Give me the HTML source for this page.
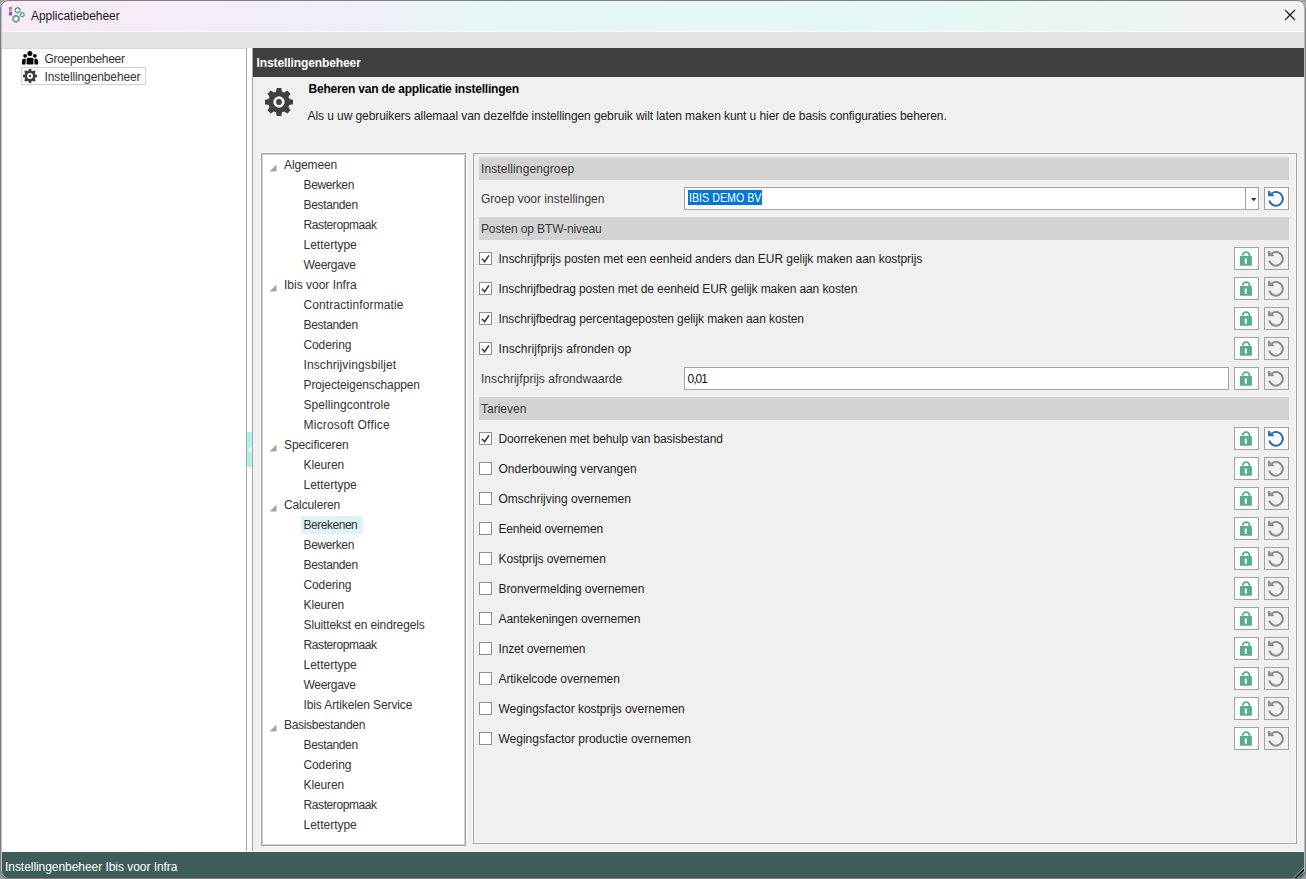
<!DOCTYPE html>
<html><head><meta charset="utf-8"><title>Applicatiebeheer</title>
<style>
*{box-sizing:border-box}
html,body{margin:0;padding:0}
body{width:1306px;height:879px;overflow:hidden;background:#9c9c9c;position:relative;font-family:"Liberation Sans",sans-serif;font-size:12px}
.win{position:absolute;left:0;top:0;width:1306px;height:879px;border-radius:8px;overflow:hidden;background:#f0f0f0}
.frame{position:absolute;left:0;top:0;width:1306px;height:879px;border:1px solid #7f7f7f;border-radius:8px;pointer-events:none;box-shadow:inset 1px 0 0 #c0c0c0,inset -1px 0 0 #b8b8b8}
.a{position:absolute}
.t{position:absolute;white-space:nowrap;line-height:14px;font-size:12px;color:#333}
.title{left:0;top:0;width:1306px;height:31px;background:linear-gradient(90deg,#f7ebf6 0%,#f3edf7 22%,#e6f5f6 36%,#e3f7f6 70%,#e9f4f4 84%,#f0f2f2 94%,#f2f2f2 100%)}
.tr{letter-spacing:-0.12px}
.hl{position:absolute;left:301px;width:62px;height:18px;background:#dcf4f4}
.tri{position:absolute}
.band{position:absolute;left:479px;width:810px;height:23px;background:#d3d3d3}
.btn{position:absolute;width:25px;height:23px;border:1px solid #a3a3a3;background:#fff}
.ic{position:absolute;left:-1px;top:-1px}
.btn.dis{background:#f0f0f0}
.cb{position:absolute;left:479px;width:13px;height:13px;border:1px solid #8f8f8f;background:#fff;display:flex;align-items:center;justify-content:center}
.cbl{color:#222;letter-spacing:-0.07px}
.lab{color:#383838}
.combo{position:absolute;left:684px;width:575px;height:23px;border:1px solid #a3a3a3;background:#fff}
.sel{position:absolute;left:3px;top:2px;width:74px;height:15px;background:#0078d7;color:#fff;line-height:16px;font-size:12.5px;padding-left:1px;white-space:nowrap;overflow:hidden}
.csep{position:absolute;left:560px;top:0;width:1px;height:21px;background:#a3a3a3}
.carr{position:absolute;left:566px;top:10px}
.field{position:absolute;left:684px;width:545px;height:23px;border:1px solid #a3a3a3;background:#fff}
.val{color:#111}
</style></head><body>
<div class="win">
 <div class="a title"></div>
 <div class="a" style="left:6px;top:6px"><svg width="20" height="20" viewBox="0 0 20 20">
<rect x="3" y="1" width="3" height="2.8" fill="#f06a5a"/><rect x="3" y="3.8" width="3" height="2.4" fill="#6fd0c8"/><rect x="3" y="6.2" width="3" height="3.2" fill="#e020e0"/>
<g fill="#fff" stroke="#4f9793" stroke-linejoin="round">
<polygon points="11.60,6.80 9.35,5.50 9.35,2.90 11.60,1.60 13.85,2.90 13.85,5.50" stroke-width="1.3"/>
<polygon points="16.20,10.80 14.38,9.75 14.38,7.65 16.20,6.60 18.02,7.65 18.02,9.75" stroke-width="1.2"/>
<polygon points="10.00,16.10 7.14,14.45 7.14,11.15 10.00,9.50 12.86,11.15 12.86,14.45" stroke-width="1.5"/>
</g></svg></div>
 <div class="t" style="left:31px;top:9px;color:#1a1a1a;letter-spacing:-0.05px">Applicatiebeheer</div>
 <svg class="a" style="left:1284px;top:9px" width="12" height="12"><path d="M1 1 L11 11 M11 1 L1 11" stroke="#111" stroke-width="1.1"/></svg>
 <div class="a" style="left:0;top:31px;width:1306px;height:1px;background:#fbfbfb"></div>
 <div class="a" style="left:0;top:32px;width:1306px;height:16px;background:#e3e3e3"></div>
 <!-- left panel -->
 <div class="a" style="left:0;top:48px;width:246px;height:803px;background:#fff"></div>
 <div class="a" style="left:0;top:48px;width:246px;height:1px;background:#dadada"></div>
 <div class="a" style="left:246px;top:48px;width:1px;height:803px;background:#a8a8a8"></div>
 <div class="a" style="left:247px;top:48px;width:5px;height:803px;background:#fff"></div>
 <div class="a" style="left:247px;top:432px;width:5px;height:35px;background:#b0f0ea"></div>
 <svg class="a" style="left:248px;top:446px" width="4" height="7"><path d="M3.5 0 V6.5 L0 3.25 Z" fill="#fff"/></svg>
 <div class="a" style="left:252px;top:48px;width:1px;height:803px;background:#a8a8a8"></div>
 <div class="a" style="left:21px;top:51px"><svg width="18" height="16" viewBox="0 0 18 16"><g fill="#000">
<circle cx="8.9" cy="2.6" r="2.5"/><circle cx="4.1" cy="4.8" r="1.9"/><circle cx="13.9" cy="4.8" r="1.9"/>
<rect x="5.6" y="6.8" width="6.8" height="6.8" rx="1.4"/>
<path d="M1 13.6 V10 A2.2 2.2 0 0 1 3.5 7.8 H4.6 V13.6 Z"/><path d="M17 13.6 V10 A2.2 2.2 0 0 0 14.5 7.8 H13.4 V13.6 Z"/>
</g></svg></div>
 <div class="t" style="left:44.5px;top:52px;letter-spacing:-0.3px">Groepenbeheer</div>
 <div class="a" style="left:21px;top:67px;width:125px;height:18px;border:1px solid #d2d2d2"></div>
 <div class="a" style="left:22px;top:68px"><svg width="16" height="16" viewBox="-8 -8 16 16"><path d="M-1.51 -5.19 L-1.17 -7.00 L1.17 -7.00 L1.51 -5.19 L1.88 -5.06 L2.25 -4.91 L2.60 -4.73 L4.13 -5.78 L5.78 -4.13 L4.73 -2.60 L4.91 -2.25 L5.06 -1.88 L5.19 -1.51 L7.00 -1.17 L7.00 1.17 L5.19 1.51 L5.06 1.88 L4.91 2.25 L4.73 2.60 L5.78 4.13 L4.13 5.78 L2.60 4.73 L2.25 4.91 L1.88 5.06 L1.51 5.19 L1.17 7.00 L-1.17 7.00 L-1.51 5.19 L-1.88 5.06 L-2.25 4.91 L-2.60 4.73 L-4.13 5.78 L-5.78 4.13 L-4.73 2.60 L-4.91 2.25 L-5.06 1.88 L-5.19 1.51 L-7.00 1.17 L-7.00 -1.17 L-5.19 -1.51 L-5.06 -1.88 L-4.91 -2.25 L-4.73 -2.60 L-5.78 -4.13 L-4.13 -5.78 L-2.60 -4.73 L-2.25 -4.91 L-1.88 -5.06 Z" fill="#3c3c3c"/><circle r="2.95" fill="#fff"/><circle r="1.2" fill="#3c3c3c"/></svg></div>
 <div class="t" style="left:44.5px;top:70px;letter-spacing:-0.12px">Instellingenbeheer</div>
 <!-- right header -->
 <div class="a" style="left:253px;top:48px;width:1053px;height:29px;background:#404040"></div>
 <div class="t" style="left:256.5px;top:56px;color:#fff;font-weight:bold;letter-spacing:-0.1px">Instellingenbeheer</div>
 <div class="a" style="left:263px;top:86px"><svg width="32" height="32" viewBox="-16 -16 32 32"><path d="M-3.01 -10.37 L-2.33 -14.01 L2.33 -14.01 L3.01 -10.37 L3.76 -10.12 L4.50 -9.82 L5.20 -9.46 L8.26 -11.55 L11.55 -8.26 L9.46 -5.20 L9.82 -4.50 L10.12 -3.76 L10.37 -3.01 L14.01 -2.33 L14.01 2.33 L10.37 3.01 L10.12 3.76 L9.82 4.50 L9.46 5.20 L11.55 8.26 L8.26 11.55 L5.20 9.46 L4.50 9.82 L3.76 10.12 L3.01 10.37 L2.33 14.01 L-2.33 14.01 L-3.01 10.37 L-3.76 10.12 L-4.50 9.82 L-5.20 9.46 L-8.26 11.55 L-11.55 8.26 L-9.46 5.20 L-9.82 4.50 L-10.12 3.76 L-10.37 3.01 L-14.01 2.33 L-14.01 -2.33 L-10.37 -3.01 L-10.12 -3.76 L-9.82 -4.50 L-9.46 -5.20 L-11.55 -8.26 L-8.26 -11.55 L-5.20 -9.46 L-4.50 -9.82 L-3.76 -10.12 Z" fill="#404040"/><circle r="5.7" fill="#f0f0f0"/><circle r="2.9" fill="#404040"/></svg></div>
 <div class="t" style="left:308.5px;top:82px;color:#000;font-weight:bold;letter-spacing:-0.2px">Beheren van de applicatie instellingen</div>
 <div class="t" style="left:307.5px;top:108.5px;color:#222;letter-spacing:-0.08px">Als u uw gebruikers allemaal van dezelfde instellingen gebruik wilt laten maken kunt u hier de basis configuraties beheren.</div>
 <!-- tree box -->
 <div class="a" style="left:261px;top:153px;width:205px;height:693px;border:1px solid #a4a4a4;background:#fff;box-shadow:inset 1px 1px 0 #d0d0d0,inset -1px -1px 0 #d0d0d0,0 0 0 1px #f6f6f6"></div>
 <svg class="tri" style="left:269px;top:164px" width="8" height="8"><path d="M7.5 0.5 L7.5 7.5 L0.5 7.5 Z" fill="#a6a6a6"/></svg>
<div class="t tr" style="left:284px;top:158px;letter-spacing:-0.120px">Algemeen</div>
<div class="t tr" style="left:303.5px;top:178px;letter-spacing:-0.363px">Bewerken</div>
<div class="t tr" style="left:303.5px;top:198px;letter-spacing:-0.345px">Bestanden</div>
<div class="t tr" style="left:303.5px;top:218px;letter-spacing:-0.402px">Rasteropmaak</div>
<div class="t tr" style="left:303.5px;top:238px;letter-spacing:-0.009px">Lettertype</div>
<div class="t tr" style="left:303.5px;top:258px;letter-spacing:-0.291px">Weergave</div>
<svg class="tri" style="left:269px;top:284px" width="8" height="8"><path d="M7.5 0.5 L7.5 7.5 L0.5 7.5 Z" fill="#a6a6a6"/></svg>
<div class="t tr" style="left:284px;top:278px;letter-spacing:-0.006px">Ibis voor Infra</div>
<div class="t tr" style="left:303.5px;top:298px;letter-spacing:0.115px">Contractinformatie</div>
<div class="t tr" style="left:303.5px;top:318px;letter-spacing:-0.345px">Bestanden</div>
<div class="t tr" style="left:303.5px;top:338px;letter-spacing:-0.120px">Codering</div>
<div class="t tr" style="left:303.5px;top:358px;letter-spacing:0.108px">Inschrijvingsbiljet</div>
<div class="t tr" style="left:303.5px;top:378px;letter-spacing:-0.120px">Projecteigenschappen</div>
<div class="t tr" style="left:303.5px;top:398px;letter-spacing:0.073px">Spellingcontrole</div>
<div class="t tr" style="left:303.5px;top:418px;letter-spacing:0.207px">Microsoft Office</div>
<svg class="tri" style="left:269px;top:444px" width="8" height="8"><path d="M7.5 0.5 L7.5 7.5 L0.5 7.5 Z" fill="#a6a6a6"/></svg>
<div class="t tr" style="left:284px;top:438px;letter-spacing:-0.120px">Specificeren</div>
<div class="t tr" style="left:303.5px;top:458px;letter-spacing:-0.120px">Kleuren</div>
<div class="t tr" style="left:303.5px;top:478px;letter-spacing:-0.009px">Lettertype</div>
<svg class="tri" style="left:269px;top:504px" width="8" height="8"><path d="M7.5 0.5 L7.5 7.5 L0.5 7.5 Z" fill="#a6a6a6"/></svg>
<div class="t tr" style="left:284px;top:498px;letter-spacing:-0.120px">Calculeren</div>
<div class="hl" style="top:516px"></div>
<div class="t tr" style="left:303.5px;top:518px;letter-spacing:-0.470px">Berekenen</div>
<div class="t tr" style="left:303.5px;top:538px;letter-spacing:-0.363px">Bewerken</div>
<div class="t tr" style="left:303.5px;top:558px;letter-spacing:-0.345px">Bestanden</div>
<div class="t tr" style="left:303.5px;top:578px;letter-spacing:-0.120px">Codering</div>
<div class="t tr" style="left:303.5px;top:598px;letter-spacing:-0.120px">Kleuren</div>
<div class="t tr" style="left:303.5px;top:618px;letter-spacing:-0.120px">Sluittekst en eindregels</div>
<div class="t tr" style="left:303.5px;top:638px;letter-spacing:-0.402px">Rasteropmaak</div>
<div class="t tr" style="left:303.5px;top:658px;letter-spacing:-0.009px">Lettertype</div>
<div class="t tr" style="left:303.5px;top:678px;letter-spacing:-0.291px">Weergave</div>
<div class="t tr" style="left:303.5px;top:698px;letter-spacing:-0.120px">Ibis Artikelen Service</div>
<svg class="tri" style="left:269px;top:724px" width="8" height="8"><path d="M7.5 0.5 L7.5 7.5 L0.5 7.5 Z" fill="#a6a6a6"/></svg>
<div class="t tr" style="left:284px;top:718px;letter-spacing:-0.312px">Basisbestanden</div>
<div class="t tr" style="left:303.5px;top:738px;letter-spacing:-0.345px">Bestanden</div>
<div class="t tr" style="left:303.5px;top:758px;letter-spacing:-0.120px">Codering</div>
<div class="t tr" style="left:303.5px;top:778px;letter-spacing:-0.120px">Kleuren</div>
<div class="t tr" style="left:303.5px;top:798px;letter-spacing:-0.402px">Rasteropmaak</div>
<div class="t tr" style="left:303.5px;top:818px;letter-spacing:-0.009px">Lettertype</div>

 <!-- settings box -->
 <div class="a" style="left:473px;top:153px;width:824px;height:691px;border:1px solid #a4a4a4;background:#f0f0f0;box-shadow:inset 1px 1px 0 #f8f8f8,inset -1px -1px 0 #f8f8f8,0 0 0 1px #f6f6f6"></div>
 <div class="band" style="top:157px"></div>
<div class="t lab" style="left:481px;top:162px;letter-spacing:0.106px">Instellingengroep</div>
<div class="t lab" style="left:481px;top:192px;">Groep voor instellingen</div>
<div class="combo" style="top:187px"><div class="sel"><span style="display:inline-block;transform:scaleX(0.855);transform-origin:0 0">IBIS DEMO BV</span></div><div class="csep"></div><svg class="carr" width="6" height="4"><path d="M0 0 H5.5 L2.75 3.2 Z" fill="#333"/></svg></div>
<div class="btn" style="left:1264px;top:187px"><svg class="ic" width="25" height="23" viewBox="0 0 25 23"><path d="M5.3 13.6 A6.85 6.85 0 1 0 7.6 6.5" fill="none" stroke="#2f6fb8" stroke-width="2.1"/><path d="M4.05 3.9 L6.1 3.9 L6.5 5.7 L9.9 7.9 L9.9 9.3 L4.05 9.3 Z" fill="#2f6fb8"/></svg></div>
<div class="band" style="top:217px"></div>
<div class="t lab" style="left:481px;top:222px;letter-spacing:-0.132px">Posten op BTW-niveau</div>
<div class="cb" style="top:252px"><svg width="11" height="11" viewBox="0 0 11 11"><path d="M2 5.8 L4.6 8.7 L8.9 2.4" fill="none" stroke="#3a3a3a" stroke-width="1.6"/></svg></div>
<div class="t cbl" style="left:498.5px;top:252px;letter-spacing:-0.057px">Inschrijfprijs posten met een eenheid anders dan EUR gelijk maken aan kostprijs</div>
<div class="btn" style="left:1234px;top:247px"><svg class="ic" width="25" height="23" viewBox="0 0 25 23"><path d="M8.7 8.5 A3.4 3.4 0 0 1 15.5 8.5 V9.6" fill="none" stroke="#57ae88" stroke-width="1.9"/><rect x="5.9" y="9" width="12" height="9.7" rx="0.4" fill="#57ae88"/><rect x="10.8" y="11.5" width="2" height="5.2" fill="#fff"/></svg></div>
<div class="btn dis" style="left:1264px;top:247px"><svg class="ic" width="25" height="23" viewBox="0 0 25 23"><path d="M5.3 13.6 A6.85 6.85 0 1 0 7.6 6.5" fill="none" stroke="#8c8c8c" stroke-width="2.1"/><path d="M4.05 3.9 L6.1 3.9 L6.5 5.7 L9.9 7.9 L9.9 9.3 L4.05 9.3 Z" fill="#8c8c8c"/></svg></div>
<div class="cb" style="top:282px"><svg width="11" height="11" viewBox="0 0 11 11"><path d="M2 5.8 L4.6 8.7 L8.9 2.4" fill="none" stroke="#3a3a3a" stroke-width="1.6"/></svg></div>
<div class="t cbl" style="left:498.5px;top:282px;letter-spacing:-0.095px">Inschrijfbedrag posten met de eenheid EUR gelijk maken aan kosten</div>
<div class="btn" style="left:1234px;top:277px"><svg class="ic" width="25" height="23" viewBox="0 0 25 23"><path d="M8.7 8.5 A3.4 3.4 0 0 1 15.5 8.5 V9.6" fill="none" stroke="#57ae88" stroke-width="1.9"/><rect x="5.9" y="9" width="12" height="9.7" rx="0.4" fill="#57ae88"/><rect x="10.8" y="11.5" width="2" height="5.2" fill="#fff"/></svg></div>
<div class="btn dis" style="left:1264px;top:277px"><svg class="ic" width="25" height="23" viewBox="0 0 25 23"><path d="M5.3 13.6 A6.85 6.85 0 1 0 7.6 6.5" fill="none" stroke="#8c8c8c" stroke-width="2.1"/><path d="M4.05 3.9 L6.1 3.9 L6.5 5.7 L9.9 7.9 L9.9 9.3 L4.05 9.3 Z" fill="#8c8c8c"/></svg></div>
<div class="cb" style="top:312px"><svg width="11" height="11" viewBox="0 0 11 11"><path d="M2 5.8 L4.6 8.7 L8.9 2.4" fill="none" stroke="#3a3a3a" stroke-width="1.6"/></svg></div>
<div class="t cbl" style="left:498.5px;top:312px;letter-spacing:-0.086px">Inschrijfbedrag percentageposten gelijk maken aan kosten</div>
<div class="btn" style="left:1234px;top:307px"><svg class="ic" width="25" height="23" viewBox="0 0 25 23"><path d="M8.7 8.5 A3.4 3.4 0 0 1 15.5 8.5 V9.6" fill="none" stroke="#57ae88" stroke-width="1.9"/><rect x="5.9" y="9" width="12" height="9.7" rx="0.4" fill="#57ae88"/><rect x="10.8" y="11.5" width="2" height="5.2" fill="#fff"/></svg></div>
<div class="btn dis" style="left:1264px;top:307px"><svg class="ic" width="25" height="23" viewBox="0 0 25 23"><path d="M5.3 13.6 A6.85 6.85 0 1 0 7.6 6.5" fill="none" stroke="#8c8c8c" stroke-width="2.1"/><path d="M4.05 3.9 L6.1 3.9 L6.5 5.7 L9.9 7.9 L9.9 9.3 L4.05 9.3 Z" fill="#8c8c8c"/></svg></div>
<div class="cb" style="top:342px"><svg width="11" height="11" viewBox="0 0 11 11"><path d="M2 5.8 L4.6 8.7 L8.9 2.4" fill="none" stroke="#3a3a3a" stroke-width="1.6"/></svg></div>
<div class="t cbl" style="left:498.5px;top:342px;letter-spacing:0.074px">Inschrijfprijs afronden op</div>
<div class="btn" style="left:1234px;top:337px"><svg class="ic" width="25" height="23" viewBox="0 0 25 23"><path d="M8.7 8.5 A3.4 3.4 0 0 1 15.5 8.5 V9.6" fill="none" stroke="#57ae88" stroke-width="1.9"/><rect x="5.9" y="9" width="12" height="9.7" rx="0.4" fill="#57ae88"/><rect x="10.8" y="11.5" width="2" height="5.2" fill="#fff"/></svg></div>
<div class="btn dis" style="left:1264px;top:337px"><svg class="ic" width="25" height="23" viewBox="0 0 25 23"><path d="M5.3 13.6 A6.85 6.85 0 1 0 7.6 6.5" fill="none" stroke="#8c8c8c" stroke-width="2.1"/><path d="M4.05 3.9 L6.1 3.9 L6.5 5.7 L9.9 7.9 L9.9 9.3 L4.05 9.3 Z" fill="#8c8c8c"/></svg></div>
<div class="t lab" style="left:481px;top:372px;letter-spacing:0.04px">Inschrijfprijs afrondwaarde</div>
<div class="field" style="top:367px"><div class="t val" style="left:2.5px;top:4px;letter-spacing:-1px">0,01</div></div>
<div class="btn" style="left:1234px;top:367px"><svg class="ic" width="25" height="23" viewBox="0 0 25 23"><path d="M8.7 8.5 A3.4 3.4 0 0 1 15.5 8.5 V9.6" fill="none" stroke="#57ae88" stroke-width="1.9"/><rect x="5.9" y="9" width="12" height="9.7" rx="0.4" fill="#57ae88"/><rect x="10.8" y="11.5" width="2" height="5.2" fill="#fff"/></svg></div>
<div class="btn dis" style="left:1264px;top:367px"><svg class="ic" width="25" height="23" viewBox="0 0 25 23"><path d="M5.3 13.6 A6.85 6.85 0 1 0 7.6 6.5" fill="none" stroke="#8c8c8c" stroke-width="2.1"/><path d="M4.05 3.9 L6.1 3.9 L6.5 5.7 L9.9 7.9 L9.9 9.3 L4.05 9.3 Z" fill="#8c8c8c"/></svg></div>
<div class="band" style="top:397px"></div>
<div class="t lab" style="left:481px;top:402px;letter-spacing:0.000px">Tarieven</div>
<div class="cb" style="top:432px"><svg width="11" height="11" viewBox="0 0 11 11"><path d="M2 5.8 L4.6 8.7 L8.9 2.4" fill="none" stroke="#3a3a3a" stroke-width="1.6"/></svg></div>
<div class="t cbl" style="left:498.5px;top:432px;letter-spacing:-0.117px">Doorrekenen met behulp van basisbestand</div>
<div class="btn" style="left:1234px;top:427px"><svg class="ic" width="25" height="23" viewBox="0 0 25 23"><path d="M8.7 8.5 A3.4 3.4 0 0 1 15.5 8.5 V9.6" fill="none" stroke="#57ae88" stroke-width="1.9"/><rect x="5.9" y="9" width="12" height="9.7" rx="0.4" fill="#57ae88"/><rect x="10.8" y="11.5" width="2" height="5.2" fill="#fff"/></svg></div>
<div class="btn" style="left:1264px;top:427px"><svg class="ic" width="25" height="23" viewBox="0 0 25 23"><path d="M5.3 13.6 A6.85 6.85 0 1 0 7.6 6.5" fill="none" stroke="#2f6fb8" stroke-width="2.1"/><path d="M4.05 3.9 L6.1 3.9 L6.5 5.7 L9.9 7.9 L9.9 9.3 L4.05 9.3 Z" fill="#2f6fb8"/></svg></div>
<div class="cb" style="top:462px"></div>
<div class="t cbl" style="left:498.5px;top:462px;letter-spacing:0.035px">Onderbouwing vervangen</div>
<div class="btn" style="left:1234px;top:457px"><svg class="ic" width="25" height="23" viewBox="0 0 25 23"><path d="M8.7 8.5 A3.4 3.4 0 0 1 15.5 8.5 V9.6" fill="none" stroke="#57ae88" stroke-width="1.9"/><rect x="5.9" y="9" width="12" height="9.7" rx="0.4" fill="#57ae88"/><rect x="10.8" y="11.5" width="2" height="5.2" fill="#fff"/></svg></div>
<div class="btn dis" style="left:1264px;top:457px"><svg class="ic" width="25" height="23" viewBox="0 0 25 23"><path d="M5.3 13.6 A6.85 6.85 0 1 0 7.6 6.5" fill="none" stroke="#8c8c8c" stroke-width="2.1"/><path d="M4.05 3.9 L6.1 3.9 L6.5 5.7 L9.9 7.9 L9.9 9.3 L4.05 9.3 Z" fill="#8c8c8c"/></svg></div>
<div class="cb" style="top:492px"></div>
<div class="t cbl" style="left:498.5px;top:492px;letter-spacing:-0.013px">Omschrijving overnemen</div>
<div class="btn" style="left:1234px;top:487px"><svg class="ic" width="25" height="23" viewBox="0 0 25 23"><path d="M8.7 8.5 A3.4 3.4 0 0 1 15.5 8.5 V9.6" fill="none" stroke="#57ae88" stroke-width="1.9"/><rect x="5.9" y="9" width="12" height="9.7" rx="0.4" fill="#57ae88"/><rect x="10.8" y="11.5" width="2" height="5.2" fill="#fff"/></svg></div>
<div class="btn dis" style="left:1264px;top:487px"><svg class="ic" width="25" height="23" viewBox="0 0 25 23"><path d="M5.3 13.6 A6.85 6.85 0 1 0 7.6 6.5" fill="none" stroke="#8c8c8c" stroke-width="2.1"/><path d="M4.05 3.9 L6.1 3.9 L6.5 5.7 L9.9 7.9 L9.9 9.3 L4.05 9.3 Z" fill="#8c8c8c"/></svg></div>
<div class="cb" style="top:522px"></div>
<div class="t cbl" style="left:498.5px;top:522px;letter-spacing:-0.176px">Eenheid overnemen</div>
<div class="btn" style="left:1234px;top:517px"><svg class="ic" width="25" height="23" viewBox="0 0 25 23"><path d="M8.7 8.5 A3.4 3.4 0 0 1 15.5 8.5 V9.6" fill="none" stroke="#57ae88" stroke-width="1.9"/><rect x="5.9" y="9" width="12" height="9.7" rx="0.4" fill="#57ae88"/><rect x="10.8" y="11.5" width="2" height="5.2" fill="#fff"/></svg></div>
<div class="btn dis" style="left:1264px;top:517px"><svg class="ic" width="25" height="23" viewBox="0 0 25 23"><path d="M5.3 13.6 A6.85 6.85 0 1 0 7.6 6.5" fill="none" stroke="#8c8c8c" stroke-width="2.1"/><path d="M4.05 3.9 L6.1 3.9 L6.5 5.7 L9.9 7.9 L9.9 9.3 L4.05 9.3 Z" fill="#8c8c8c"/></svg></div>
<div class="cb" style="top:552px"></div>
<div class="t cbl" style="left:498.5px;top:552px;letter-spacing:-0.114px">Kostprijs overnemen</div>
<div class="btn" style="left:1234px;top:547px"><svg class="ic" width="25" height="23" viewBox="0 0 25 23"><path d="M8.7 8.5 A3.4 3.4 0 0 1 15.5 8.5 V9.6" fill="none" stroke="#57ae88" stroke-width="1.9"/><rect x="5.9" y="9" width="12" height="9.7" rx="0.4" fill="#57ae88"/><rect x="10.8" y="11.5" width="2" height="5.2" fill="#fff"/></svg></div>
<div class="btn dis" style="left:1264px;top:547px"><svg class="ic" width="25" height="23" viewBox="0 0 25 23"><path d="M5.3 13.6 A6.85 6.85 0 1 0 7.6 6.5" fill="none" stroke="#8c8c8c" stroke-width="2.1"/><path d="M4.05 3.9 L6.1 3.9 L6.5 5.7 L9.9 7.9 L9.9 9.3 L4.05 9.3 Z" fill="#8c8c8c"/></svg></div>
<div class="cb" style="top:582px"></div>
<div class="t cbl" style="left:498.5px;top:582px;letter-spacing:-0.070px">Bronvermelding overnemen</div>
<div class="btn" style="left:1234px;top:577px"><svg class="ic" width="25" height="23" viewBox="0 0 25 23"><path d="M8.7 8.5 A3.4 3.4 0 0 1 15.5 8.5 V9.6" fill="none" stroke="#57ae88" stroke-width="1.9"/><rect x="5.9" y="9" width="12" height="9.7" rx="0.4" fill="#57ae88"/><rect x="10.8" y="11.5" width="2" height="5.2" fill="#fff"/></svg></div>
<div class="btn dis" style="left:1264px;top:577px"><svg class="ic" width="25" height="23" viewBox="0 0 25 23"><path d="M5.3 13.6 A6.85 6.85 0 1 0 7.6 6.5" fill="none" stroke="#8c8c8c" stroke-width="2.1"/><path d="M4.05 3.9 L6.1 3.9 L6.5 5.7 L9.9 7.9 L9.9 9.3 L4.05 9.3 Z" fill="#8c8c8c"/></svg></div>
<div class="cb" style="top:612px"></div>
<div class="t cbl" style="left:498.5px;top:612px;letter-spacing:-0.070px">Aantekeningen overnemen</div>
<div class="btn" style="left:1234px;top:607px"><svg class="ic" width="25" height="23" viewBox="0 0 25 23"><path d="M8.7 8.5 A3.4 3.4 0 0 1 15.5 8.5 V9.6" fill="none" stroke="#57ae88" stroke-width="1.9"/><rect x="5.9" y="9" width="12" height="9.7" rx="0.4" fill="#57ae88"/><rect x="10.8" y="11.5" width="2" height="5.2" fill="#fff"/></svg></div>
<div class="btn dis" style="left:1264px;top:607px"><svg class="ic" width="25" height="23" viewBox="0 0 25 23"><path d="M5.3 13.6 A6.85 6.85 0 1 0 7.6 6.5" fill="none" stroke="#8c8c8c" stroke-width="2.1"/><path d="M4.05 3.9 L6.1 3.9 L6.5 5.7 L9.9 7.9 L9.9 9.3 L4.05 9.3 Z" fill="#8c8c8c"/></svg></div>
<div class="cb" style="top:642px"></div>
<div class="t cbl" style="left:498.5px;top:642px;letter-spacing:-0.184px">Inzet overnemen</div>
<div class="btn" style="left:1234px;top:637px"><svg class="ic" width="25" height="23" viewBox="0 0 25 23"><path d="M8.7 8.5 A3.4 3.4 0 0 1 15.5 8.5 V9.6" fill="none" stroke="#57ae88" stroke-width="1.9"/><rect x="5.9" y="9" width="12" height="9.7" rx="0.4" fill="#57ae88"/><rect x="10.8" y="11.5" width="2" height="5.2" fill="#fff"/></svg></div>
<div class="btn dis" style="left:1264px;top:637px"><svg class="ic" width="25" height="23" viewBox="0 0 25 23"><path d="M5.3 13.6 A6.85 6.85 0 1 0 7.6 6.5" fill="none" stroke="#8c8c8c" stroke-width="2.1"/><path d="M4.05 3.9 L6.1 3.9 L6.5 5.7 L9.9 7.9 L9.9 9.3 L4.05 9.3 Z" fill="#8c8c8c"/></svg></div>
<div class="cb" style="top:672px"></div>
<div class="t cbl" style="left:498.5px;top:672px;letter-spacing:-0.070px">Artikelcode overnemen</div>
<div class="btn" style="left:1234px;top:667px"><svg class="ic" width="25" height="23" viewBox="0 0 25 23"><path d="M8.7 8.5 A3.4 3.4 0 0 1 15.5 8.5 V9.6" fill="none" stroke="#57ae88" stroke-width="1.9"/><rect x="5.9" y="9" width="12" height="9.7" rx="0.4" fill="#57ae88"/><rect x="10.8" y="11.5" width="2" height="5.2" fill="#fff"/></svg></div>
<div class="btn dis" style="left:1264px;top:667px"><svg class="ic" width="25" height="23" viewBox="0 0 25 23"><path d="M5.3 13.6 A6.85 6.85 0 1 0 7.6 6.5" fill="none" stroke="#8c8c8c" stroke-width="2.1"/><path d="M4.05 3.9 L6.1 3.9 L6.5 5.7 L9.9 7.9 L9.9 9.3 L4.05 9.3 Z" fill="#8c8c8c"/></svg></div>
<div class="cb" style="top:702px"></div>
<div class="t cbl" style="left:498.5px;top:702px;letter-spacing:-0.029px">Wegingsfactor kostprijs overnemen</div>
<div class="btn" style="left:1234px;top:697px"><svg class="ic" width="25" height="23" viewBox="0 0 25 23"><path d="M8.7 8.5 A3.4 3.4 0 0 1 15.5 8.5 V9.6" fill="none" stroke="#57ae88" stroke-width="1.9"/><rect x="5.9" y="9" width="12" height="9.7" rx="0.4" fill="#57ae88"/><rect x="10.8" y="11.5" width="2" height="5.2" fill="#fff"/></svg></div>
<div class="btn dis" style="left:1264px;top:697px"><svg class="ic" width="25" height="23" viewBox="0 0 25 23"><path d="M5.3 13.6 A6.85 6.85 0 1 0 7.6 6.5" fill="none" stroke="#8c8c8c" stroke-width="2.1"/><path d="M4.05 3.9 L6.1 3.9 L6.5 5.7 L9.9 7.9 L9.9 9.3 L4.05 9.3 Z" fill="#8c8c8c"/></svg></div>
<div class="cb" style="top:732px"></div>
<div class="t cbl" style="left:498.5px;top:732px;letter-spacing:-0.004px">Wegingsfactor productie overnemen</div>
<div class="btn" style="left:1234px;top:727px"><svg class="ic" width="25" height="23" viewBox="0 0 25 23"><path d="M8.7 8.5 A3.4 3.4 0 0 1 15.5 8.5 V9.6" fill="none" stroke="#57ae88" stroke-width="1.9"/><rect x="5.9" y="9" width="12" height="9.7" rx="0.4" fill="#57ae88"/><rect x="10.8" y="11.5" width="2" height="5.2" fill="#fff"/></svg></div>
<div class="btn dis" style="left:1264px;top:727px"><svg class="ic" width="25" height="23" viewBox="0 0 25 23"><path d="M5.3 13.6 A6.85 6.85 0 1 0 7.6 6.5" fill="none" stroke="#8c8c8c" stroke-width="2.1"/><path d="M4.05 3.9 L6.1 3.9 L6.5 5.7 L9.9 7.9 L9.9 9.3 L4.05 9.3 Z" fill="#8c8c8c"/></svg></div>

 <!-- status bar -->
 <div class="a" style="left:0;top:851px;width:1306px;height:1px;background:#fff"></div>
 <div class="a" style="left:0;top:852px;width:1306px;height:27px;background:#3e5c5a"></div>
 <div class="t" style="left:5px;top:860px;color:#fff;letter-spacing:-0.05px">Instellingenbeheer Ibis voor Infra</div>
 <svg class="a" style="left:1290px;top:863px" width="16" height="16"><path d="M3.6 15.4 L15.4 3.6" stroke="#b4ece6" stroke-width="1.1" stroke-dasharray="0.9 0.5"/><path d="M5 15.6 L15.6 5" stroke="#000" stroke-width="1.3"/><path d="M7.6 15.4 L15.4 7.6" stroke="#b4ece6" stroke-width="1.1" stroke-dasharray="0.9 0.5"/><path d="M9 15.6 L15.6 9" stroke="#000" stroke-width="1.3"/></svg>
</div>
<div class="frame"></div>
</body></html>
